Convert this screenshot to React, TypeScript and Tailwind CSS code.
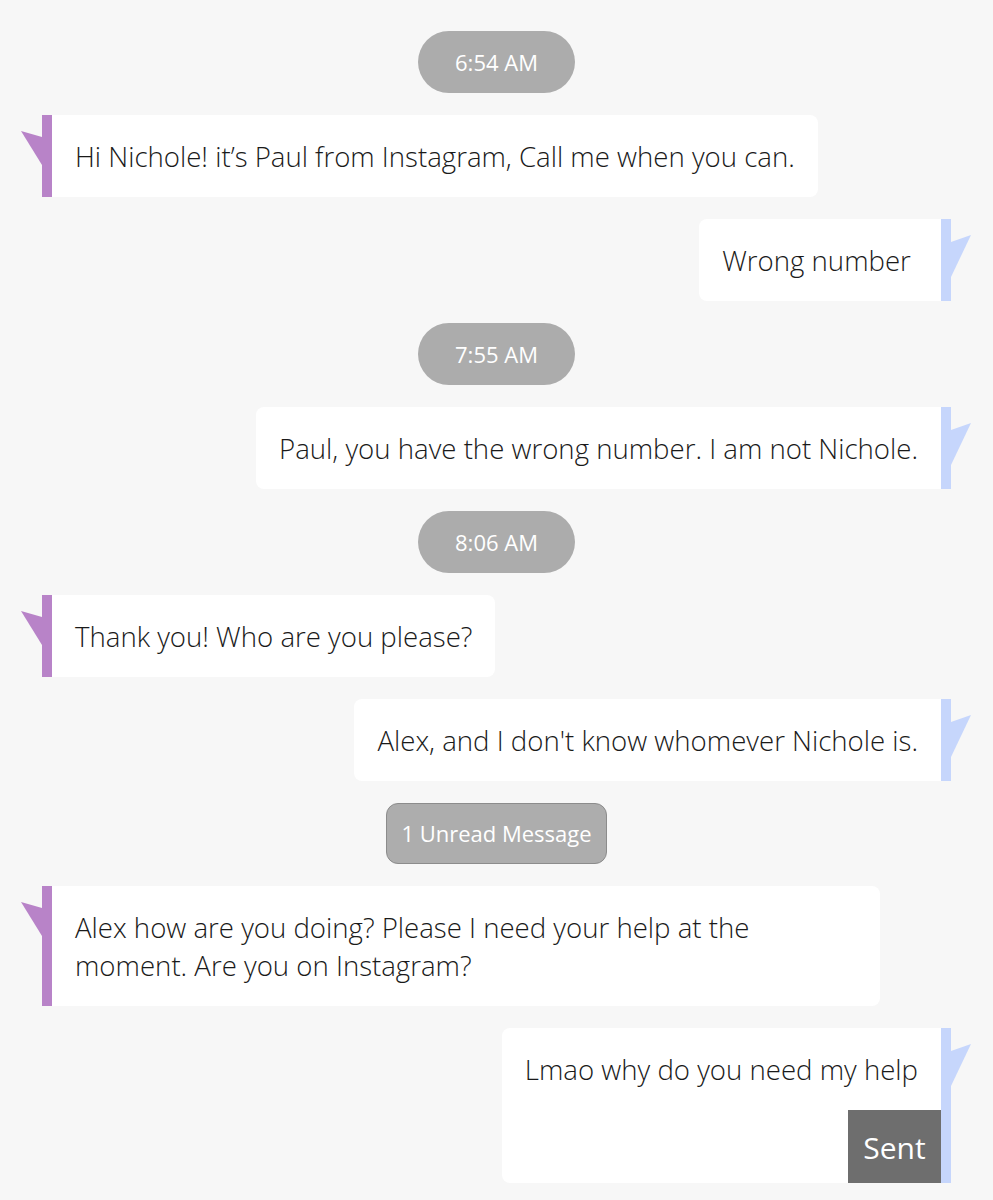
import type { ReactNode } from 'react';

const PURPLE = '#b883c8';
const BLUE = '#c6d6fc';

function Stamp({ children }: { children: ReactNode }) {
  return (
    <div className="flex justify-center">
      <div className="h-[62px] w-[157px] rounded-full bg-[#acacac] flex items-center justify-center text-white text-[22px] font-['Open_Sans','Liberation_Sans',sans-serif]">
        {children}
      </div>
    </div>
  );
}

function Incoming({ children }: { children: ReactNode }) {
  return (
    <div className="flex pl-[21px]">
      <svg width="21" height="60" viewBox="0 0 21 60" className="shrink-0">
        <polygon points="0,16 21,22 21,50" fill={PURPLE} />
      </svg>
      <div className="w-[10px] shrink-0" style={{ backgroundColor: PURPLE }} />
      <div className="bg-white rounded-r-[8px] px-[23px] py-[22px] text-[27.6px] leading-[38px] font-light text-[#1a1a1a] font-['Open_Sans','Liberation_Sans',sans-serif]">
        {children}
      </div>
    </div>
  );
}

function Outgoing({ children, sent }: { children: ReactNode; sent?: boolean }) {
  return (
    <div className="flex justify-end pr-[22px]">
      <div className="bg-white rounded-l-[8px] flex flex-col items-end font-['Open_Sans','Liberation_Sans',sans-serif]">
        <div className="px-[23px] py-[22px] text-[27.6px] leading-[38px] font-light text-[#1a1a1a]">{children}</div>
        {sent && (
          <div className="h-[73px] w-[93px] bg-[#6e6e6e] text-white text-[30px] flex items-center justify-center pt-[2px]">
            Sent
          </div>
        )}
      </div>
      <div className="w-[10px] shrink-0" style={{ backgroundColor: BLUE }} />
      <svg width="20" height="60" viewBox="0 0 20 60" className="shrink-0">
        <polygon points="0,23 20,16 0,58" fill={BLUE} />
      </svg>
    </div>
  );
}

export default function App() {
  return (
    <div className="w-[993px] min-h-[1200px] bg-[#f7f7f7] pt-[31px] flex flex-col gap-[22px]">
      <Stamp>6:54 AM</Stamp>
      <Incoming>Hi Nichole! it’s Paul from Instagram, Call me when you can.</Incoming>
      <Outgoing>Wrong number&nbsp;</Outgoing>
      <Stamp>7:55 AM</Stamp>
      <Outgoing>Paul, you have the wrong number. I am not Nichole.</Outgoing>
      <Stamp>8:06 AM</Stamp>
      <Incoming>Thank you! Who are you please?</Incoming>
      <Outgoing>Alex, and I don't know whomever Nichole is.</Outgoing>
      <div className="flex justify-center">
        <div className="h-[61px] w-[221px] rounded-[12px] bg-[#adadad] border border-[#8c8c8c] flex items-center justify-center text-white text-[22px] font-['Open_Sans','Liberation_Sans',sans-serif]">
          1 Unread Message
        </div>
      </div>
      <Incoming>
        <div className="w-[782px]">
          Alex how are you doing? Please I need your help at the
          <br />
          moment. Are you on Instagram?
        </div>
      </Incoming>
      <Outgoing sent>Lmao why do you need my help</Outgoing>
    </div>
  );
}
